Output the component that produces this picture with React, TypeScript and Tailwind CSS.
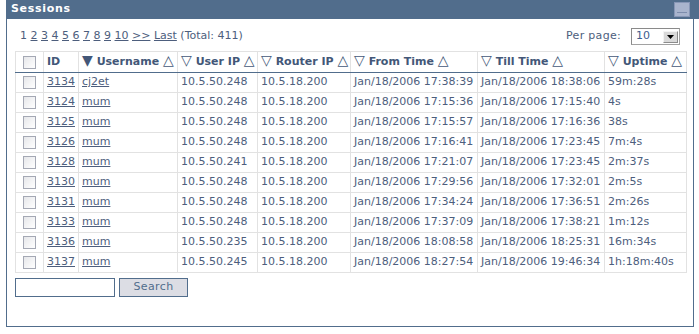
import React from "react";

interface Session {
  id: number;
  user: string;
  userIp: string;
  routerIp: string;
  from: string;
  till: string;
  uptime: string;
}

const sessions: Session[] = [
  { id: 3134, user: "cj2et", userIp: "10.5.50.248", routerIp: "10.5.18.200", from: "Jan/18/2006 17:38:39", till: "Jan/18/2006 18:38:06", uptime: "59m:28s" },
  { id: 3124, user: "mum", userIp: "10.5.50.248", routerIp: "10.5.18.200", from: "Jan/18/2006 17:15:36", till: "Jan/18/2006 17:15:40", uptime: "4s" },
  { id: 3125, user: "mum", userIp: "10.5.50.248", routerIp: "10.5.18.200", from: "Jan/18/2006 17:15:57", till: "Jan/18/2006 17:16:36", uptime: "38s" },
  { id: 3126, user: "mum", userIp: "10.5.50.248", routerIp: "10.5.18.200", from: "Jan/18/2006 17:16:41", till: "Jan/18/2006 17:23:45", uptime: "7m:4s" },
  { id: 3128, user: "mum", userIp: "10.5.50.241", routerIp: "10.5.18.200", from: "Jan/18/2006 17:21:07", till: "Jan/18/2006 17:23:45", uptime: "2m:37s" },
  { id: 3130, user: "mum", userIp: "10.5.50.248", routerIp: "10.5.18.200", from: "Jan/18/2006 17:29:56", till: "Jan/18/2006 17:32:01", uptime: "2m:5s" },
  { id: 3131, user: "mum", userIp: "10.5.50.248", routerIp: "10.5.18.200", from: "Jan/18/2006 17:34:24", till: "Jan/18/2006 17:36:51", uptime: "2m:26s" },
  { id: 3133, user: "mum", userIp: "10.5.50.248", routerIp: "10.5.18.200", from: "Jan/18/2006 17:37:09", till: "Jan/18/2006 17:38:21", uptime: "1m:12s" },
  { id: 3136, user: "mum", userIp: "10.5.50.235", routerIp: "10.5.18.200", from: "Jan/18/2006 18:08:58", till: "Jan/18/2006 18:25:31", uptime: "16m:34s" },
  { id: 3137, user: "mum", userIp: "10.5.50.245", routerIp: "10.5.18.200", from: "Jan/18/2006 18:27:54", till: "Jan/18/2006 19:46:34", uptime: "1h:18m:40s" },
];

function Checkbox() {
  return <div className="w-[13px] h-[13px] border border-[#a4a8b4] bg-gradient-to-br from-[#e6e7ea] to-white" />;
}

function SortHead({ label, active }: { label: string; active?: boolean }) {
  return (
    <span className="whitespace-nowrap">
      <span className="font-normal text-[14px] leading-none">{active ? "▼" : "▽"}</span>
      {" "}{label}{" "}
      <span className="font-normal text-[14px] leading-none">△</span>
    </span>
  );
}

export default function App() {
  const cell = "border border-[#e2e2e2] px-[3px] h-[20px] whitespace-nowrap";
  const head = `${cell} h-[21px] border-b-[#516d8c]`;
  return (
    <div className="w-[699px] h-[334px] bg-white font-['DejaVu_Sans',sans-serif] text-[11px] text-[#4d5e7d] pl-[6px]">
      {/* Title bar */}
      <div className="h-[19px] bg-[#516d8c] flex items-center justify-between pl-[5px] pr-[9px]">
        <span className="text-white font-bold text-[11px] tracking-[0.7px]">Sessions</span>
        <div className="w-[16px] h-[15px] bg-[#a9b4cd] border border-[#8796b6] flex items-end justify-center pb-[3px]">
          <div className="w-[10px] h-[1px] bg-[#7d8cac]" />
        </div>
      </div>

      {/* Panel body */}
      <div className="w-[688px] h-[308px] border border-t-0 border-[#516d8c] px-[8px]">
        <div className="flex items-center justify-between h-[32px] pt-[3px]">
          <div className="pl-[5px]">
            1{" "}
            {["2", "3", "4", "5", "6", "7", "8", "9", "10", ">>", "Last"].map((p) => (
              <React.Fragment key={p}>
                <a className="underline">{p}</a>{" "}
              </React.Fragment>
            ))}
            (Total: 411)
          </div>
          <div className="flex items-center gap-[10px] pr-[5px]">
            <span className="tracking-[0.3px]">Per page:</span>
            <div className="w-[49px] h-[17px] border border-[#a2a2a2] border-t-[#8a8a8a] border-l-[#8a8a8a] bg-white flex items-center justify-between pl-[4px] pr-[1px]">
              <span className="text-[#3f5d8e]">10</span>
              <div className="w-[15px] h-[12px] bg-[#d9d9d9] border border-[#f4f4f4] border-b-[#8c8c8c] border-r-[#8c8c8c] flex items-center justify-center">
                <svg width="7" height="4" viewBox="0 0 7 4">
                  <polygon points="0,0 7,0 3.5,4" fill="#000" />
                </svg>
              </div>
            </div>
          </div>
        </div>

        <table className="border-collapse border border-[#516d8c] w-[671px] table-fixed">
          <colgroup>
            <col className="w-[28px]" />
            <col className="w-[35px]" />
            <col className="w-[99px]" />
            <col className="w-[80px]" />
            <col className="w-[93px]" />
            <col className="w-[127px]" />
            <col className="w-[127px]" />
            <col className="w-[82px]" />
          </colgroup>
          <thead>
            <tr className="font-bold text-[#435778] text-left">
              <th className={head}>
                <div className="flex justify-center"><Checkbox /></div>
              </th>
              <th className={head}>ID</th>
              <th className={head}><SortHead label="Username" active /></th>
              <th className={head}><SortHead label="User IP" /></th>
              <th className={head}><SortHead label="Router IP" /></th>
              <th className={head}><SortHead label="From Time" /></th>
              <th className={head}><SortHead label="Till Time" /></th>
              <th className={head}><SortHead label="Uptime" /></th>
            </tr>
          </thead>
          <tbody>
            {sessions.map((s) => (
              <tr key={s.id}>
                <td className={cell}>
                  <div className="flex justify-center"><Checkbox /></div>
                </td>
                <td className={cell}><a className="underline">{s.id}</a></td>
                <td className={cell}><a className="underline">{s.user}</a></td>
                <td className={cell}>{s.userIp}</td>
                <td className={cell}>{s.routerIp}</td>
                <td className={cell}>{s.from}</td>
                <td className={cell}>{s.till}</td>
                <td className={cell}>{s.uptime}</td>
              </tr>
            ))}
          </tbody>
        </table>

        <div className="flex items-center gap-[4px] mt-[5px]">
          <input className="w-[100px] h-[19px] border border-[#516d8c] outline-none" />
          <button className="w-[69px] h-[19px] border border-[#516d8c] bg-[#dcdde4] text-[#516d8c] text-[11px] tracking-[0.4px]">
            Search
          </button>
        </div>
      </div>
    </div>
  );
}
